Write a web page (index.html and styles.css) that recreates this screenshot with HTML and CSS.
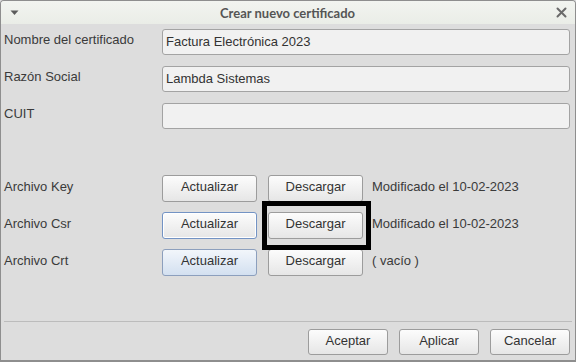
FILE: index.html
```html
<!DOCTYPE html>
<html lang="es">
<head>
    <meta charset="UTF-8">
    <title>Crear nuevo certificado</title>
    <link rel="stylesheet" href="styles.css">
</head>
<body>
    <div class="window">
        <div class="titlebar">
            <svg class="menu-arrow" width="9" height="6" viewBox="0 0 9 6"><path d="M0.5 0.5 L8.5 0.5 L4.5 5 Z" fill="#5b5b5b"/></svg>
            <span class="title">Crear nuevo certificado</span>
            <svg class="close" width="11" height="11" viewBox="0 0 11 11"><path d="M1.5 1.5 L9.5 9.5 M9.5 1.5 L1.5 9.5" stroke="#6a6a6a" stroke-width="2" stroke-linecap="round"/></svg>
        </div>

        <div class="content">
            <div class="field-row">
                <span class="label">Nombre del certificado</span>
                <div class="text-input">Factura Electrónica 2023</div>
            </div>
            <div class="field-row">
                <span class="label">Razón Social</span>
                <div class="text-input">Lambda Sistemas</div>
            </div>
            <div class="field-row">
                <span class="label">CUIT</span>
                <div class="text-input"></div>
            </div>

            <div class="file-rows">
                <div class="file-row">
                    <span class="label">Archivo Key</span>
                    <button class="btn">Actualizar</button>
                    <button class="btn">Descargar</button>
                    <span class="status">Modificado el 10-02-2023</span>
                </div>
                <div class="file-row">
                    <span class="label">Archivo Csr</span>
                    <button class="btn btn-focus">Actualizar</button>
                    <button class="btn btn-marked">Descargar</button>
                    <span class="status">Modificado el 10-02-2023</span>
                </div>
                <div class="file-row">
                    <span class="label">Archivo Crt</span>
                    <button class="btn btn-hover">Actualizar</button>
                    <button class="btn">Descargar</button>
                    <span class="status">( vacío )</span>
                </div>
            </div>
        </div>

        <div class="separator"></div>

        <div class="footer">
            <button class="btn btn-footer">Aceptar</button>
            <button class="btn btn-footer">Aplicar</button>
            <button class="btn btn-footer">Cancelar</button>
        </div>
    </div>
</body>
</html>
```

FILE: styles.css
```css
* { box-sizing: border-box; }

body {
    margin: 0;
    background: #dddddd;
    font-family: "Liberation Sans", Arial, sans-serif;
    font-size: 13px;
    color: #3a3a3a;
}

.window {
    width: 576px;
    height: 362px;
    display: flex;
    flex-direction: column;
    background: #dddddd;
    border: 1px solid #8e8e8e;
    border-bottom-width: 2px;
    border-radius: 4px 4px 0 0;
    overflow: hidden;
}

.titlebar {
    height: 23px;
    display: flex;
    align-items: center;
    justify-content: space-between;
    padding: 0 8px 0 9px;
    background: linear-gradient(#f2f4f0, #eaede7);
}
.title {
    font-family: Lato, "Noto Sans", sans-serif;
    font-weight: bold;
    font-size: 13px;
    color: #555555;
}
.menu-arrow { margin-top: 1px; }

.content {
    flex: 1;
    padding: 5px 5px 0 3px;
}

.field-row {
    display: grid;
    grid-template-columns: 158px 1fr;
    align-items: center;
    margin-bottom: 11px;
}
.label {
    white-space: nowrap;
    margin-bottom: 5px;
}

.text-input {
    height: 26px;
    line-height: 24px;
    padding: 0 3px;
    background: #f1f1f1;
    border: 1px solid #a3a3a3;
    border-radius: 3px;
    color: #333333;
}

.file-rows { padding-top: 35px; }

.file-row {
    display: flex;
    align-items: center;
    height: 27px;
    margin-bottom: 10px;
}
.file-row .label { width: 158px; }
.file-row .btn { width: 95px; margin-right: 11px; }
.file-row .btn + .btn { margin-right: 9px; }
.status { margin-bottom: 5px; }

.btn {
    height: 27px;
    padding: 0 0 4px;
    font-family: "Liberation Sans", Arial, sans-serif;
    font-size: 13px;
    color: #333333;
    background: linear-gradient(#fcfcfc, #e6e6e6);
    border: 1px solid #9c9c9c;
    border-radius: 3px;
}
.btn-focus {
    border-color: #7393c4;
    box-shadow: inset 0 0 0 1px #ffffff;
}
.btn-hover {
    background: linear-gradient(#f2f6fb, #d3e0f0);
    border-color: #8c9fbd;
}
.btn-marked { position: relative; }
.btn-marked::after {
    content: "";
    position: absolute;
    left: -7px;
    right: -9px;
    top: -12px;
    bottom: -12px;
    border: 5px solid #000000;
}

.separator {
    height: 1px;
    margin: 0 3px;
    background: #bcbcbc;
}

.footer {
    display: flex;
    justify-content: flex-end;
    gap: 11px;
    padding: 7px 5px 5px;
}
.btn-footer { width: 80px; height: 26px; }
```
